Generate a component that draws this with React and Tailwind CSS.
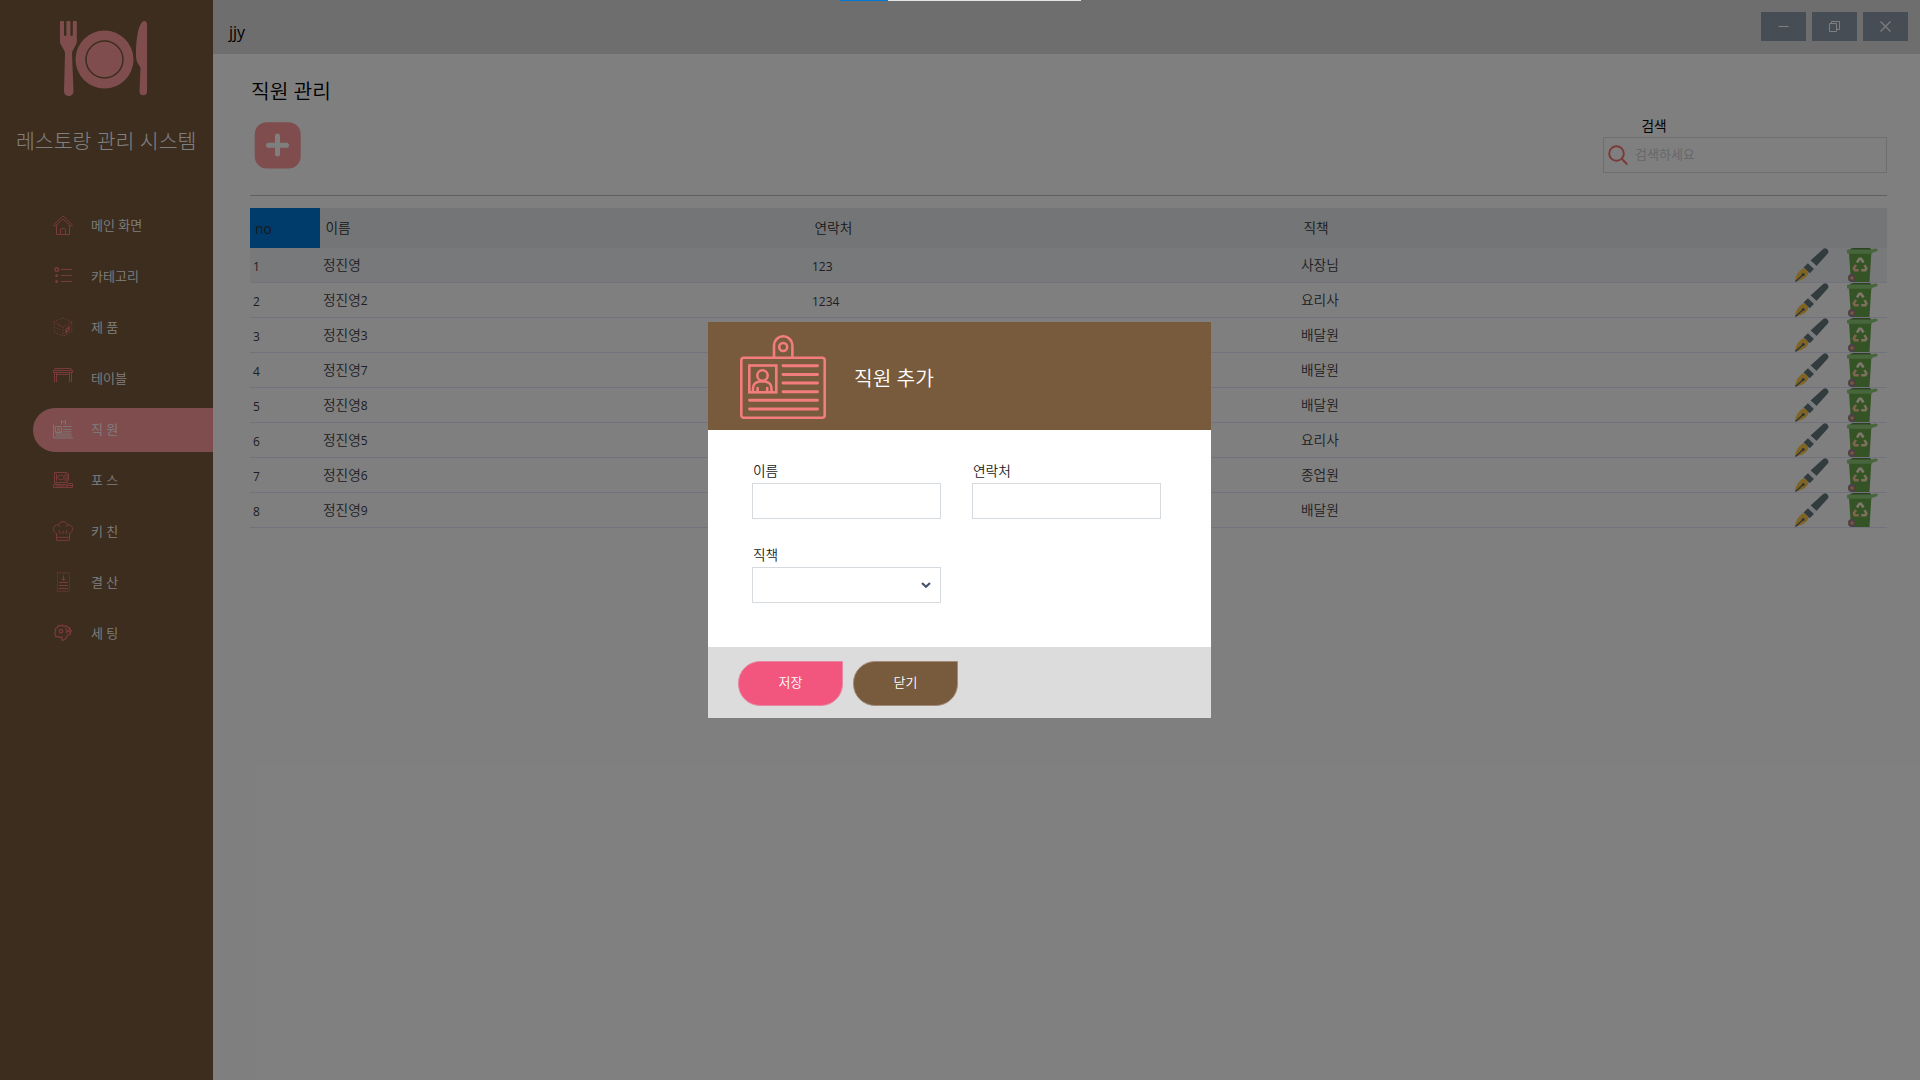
import React from "react";

const FONT = "font-['Open_Sans','Noto_Sans_CJK_KR',sans-serif]";

const svgProps = {
  width: 20,
  height: 20,
  viewBox: "0 0 20 20",
  fill: "none",
  stroke: "currentColor",
  strokeWidth: 1,
};

const HomeIcon = () => (
  <svg {...svgProps}>
    <path d="M.6 10 10 .9 19.4 10 18.2 11.4 10 4 1.8 11.4Z" />
    <path d="M3.5 10.2v9.3h13v-9.3M7.5 19.3v-4.6q0-1.2 1.2-1.2h2.6q1.2 0 1.2 1.2v4.6" />
  </svg>
);
const ListIcon = () => (
  <svg {...svgProps}>
    <circle cx="3.8" cy="3.6" r="1.8" strokeWidth="1.4" />
    <path d="M8 3.5h11M8 9.5h11M8 15.5h11" />
    <circle cx="3.6" cy="9.6" r="1.5" fill="currentColor" stroke="none" />
    <circle cx="3.6" cy="15.6" r="1.5" fill="currentColor" stroke="none" />
  </svg>
);
const BoxIcon = () => (
  <svg {...svgProps} strokeDasharray="1.4 1.3" strokeWidth=".9">
    <path d="M10 .8 18.8 5v10L10 19.2 1.2 15V5Z" />
    <path d="M1.2 5 10 10l8.8-5M10 10v9" />
    <path d="M4 11l3 2M5 7.5l3 2" />
    <path d="M13 12.5l3-2.5v3l-3 2.5z" strokeDasharray="none" strokeWidth="1.3" />
  </svg>
);
const TableIcon = () => (
  <svg {...svgProps}>
    <path d="M2 .5h16l1.500 2.500v1.500H.5V3ZM.8 2.500h18.400M1.500 4.500v9.800M3.500 4.500v9.800M3.500 6.500h13M16.500 4.500v9.800M18.500 4.500v9.800" />
  </svg>
);
const StaffIcon = () => (
  <svg {...svgProps}>
    <path d="M.5 5.500v13.500H20M8.500 5.500V1.500l2 1.500 2-1.500v4M2.500 7.500h6v6h-6ZM10 7.500h8.500M10 10.500h8.500M10 12.800h8.500M2.500 15h16M2.500 17h16" />
    <path d="M4 13.200q0-2 1.500-2t1.500 2" />
    <circle cx="5.500" cy="9.700" r=".8" />
  </svg>
);
const PosIcon = () => (
  <svg {...svgProps}>
    <path d="M1.500 2.500h12.500v10H1.500ZM3.500 4v7M12 4v7M14 4h1.500v6L14 12M.5 14.500h13v3H.5ZM3 12.500v2M2.500 16h9M13.500 17.500l1.500-4h4.500v4ZM15 15.500h4" />
    <ellipse cx="7.800" cy="7.500" rx="3" ry="2.400" />
  </svg>
);
const ChefIcon = () => (
  <svg {...svgProps}>
    <path d="M3.500 19.400v-7.200C1.400 11.600.5 10 .5 7.900c0-2.600 1.900-4.400 5-4C6 1.900 7.600.7 10 .7s4 1.200 4.500 3.200c3.100-.4 5 1.400 5 4 0 2.100-.9 3.700-3 4.300v7.200ZM3.500 16.300h13" />
    <path d="M5.500 4l2 2M14.500 4l-2 2M6 9l1.200 4M10 9.500v3.500M14 9l-1.200 4" />
  </svg>
);
const ReceiptIcon = () => (
  <svg {...svgProps}>
    <path d="M4 .8h12.500M4 19.200h12.500" strokeDasharray="1.500 1" />
    <path d="M4.500 1v18M16.500 1v18" strokeOpacity=".45" />
    <path d="M10.500 3.500v5M8.500 6.500l2 2 2-2M6 10.500h9M6 13.500h9M6 16.500h9" />
  </svg>
);
const SettingsIcon = () => (
  <svg {...svgProps} strokeWidth="1.300">
    <path d="M2.300 5.500 4.500 4.600 5.300 2.600 7.500 3l1.800-1 1.500 1.600 2.400-.8 1.200 1.400 2.200.4.6 2.200 1.300 1-1.200 1.200.3 1.800-3 1.300-2.400 4-2 1.300-1.500-.8.300-2.600-2.300.6-1.600-1.200-2.400.2-.6-2.200L1.800 9.300l.9-1.700Z" />
    <circle cx="8" cy="8.300" r="1.800" />
    <path d="M12.300 5l1.500 2.500-.6 2.500M16 5.500v3h-2" />
  </svg>
);

const NAV = [
  { label: "메인 화면", Icon: HomeIcon },
  { label: "카테고리", Icon: ListIcon },
  { label: "제 품", Icon: BoxIcon },
  { label: "테이블", Icon: TableIcon },
  { label: "직 원", Icon: StaffIcon, active: true },
  { label: "포 스", Icon: PosIcon },
  { label: "키 친", Icon: ChefIcon },
  { label: "결 산", Icon: ReceiptIcon },
  { label: "세 팅", Icon: SettingsIcon },
];

const ROWS = [
  ["1", "정진영", "", "123", "사장님"],
  ["2", "정진영", "2", "1234", "요리사"],
  ["3", "정진영", "3", "", "배달원"],
  ["4", "정진영", "7", "", "배달원"],
  ["5", "정진영", "8", "", "배달원"],
  ["6", "정진영", "5", "", "요리사"],
  ["7", "정진영", "6", "", "종업원"],
  ["8", "정진영", "9", "", "배달원"],
];

function Logo() {
  return (
    <svg width="88" height="76" viewBox="0 0 88 76" fill="#ff9b9b" className="shrink-0">
      <path d="M0 1.500a2 2 0 0 1 4 0V14q0 1 1.200 1t1.200-1V1.500a2 2 0 0 1 4 0V14q0 1 1.200 1t1.200-1V1.500a2 2 0 0 1 4 0V20.500q0 1.500-.8 3l-3.200 6q-.8 1.500-.8 3L13.500 70.500a4.700 4.700 0 0 1-9.500 0L5 32.500q0-1.500-.8-3L.8 23.500Q0 22 0 20.500Z" />
      <circle cx="44.500" cy="38.500" r="29" />
      <circle cx="44.500" cy="38.500" r="18.500" fill="none" stroke="#785a3c" strokeWidth="1.500" />
      <path d="M87 3.500Q87 0 84 0C79 1.500 76 15 76 35c0 5 2.500 9 4.500 11.500L79.500 71a3.800 3.800 0 0 0 7.500 0Z" />
    </svg>
  );
}

function Sidebar() {
  return (
    <aside className="flex w-[213px] shrink-0 flex-col bg-[#785a3c] text-white">
      <div className="flex h-[95px] pl-[60px] pt-[21px]">
        <Logo />
      </div>
      <div className="mt-[30px] h-8 whitespace-nowrap pl-4 text-[20.500px] font-light leading-8 text-white">
        레스토랑 관리 시스템
      </div>
      <nav className="mt-[46.500px] flex flex-col gap-[7px]">
        {NAV.map(({ label, Icon, active }) => (
          <div
            key={label}
            className={
              "ml-[33px] flex h-[44px] items-center rounded-l-full pl-5 " +
              (active ? "bg-[#ff9b9b]" : "")
            }
          >
            <span className={"-mt-px " + (active ? "text-[#ffe8e8]" : "text-[#f07474]")}>
              <Icon />
            </span>
            <span className="-mt-px ml-[18px] text-[13px] font-[350] leading-5 text-white">{label}</span>
          </div>
        ))}
      </nav>
    </aside>
  );
}

function WindowButton({ children }) {
  return (
    <button className="flex h-[29px] w-[45px] items-center justify-center bg-[#8d9aa9]">
      <svg width="11" height="11" viewBox="0 0 11 11" fill="none" stroke="#fff">
        {children}
      </svg>
    </button>
  );
}

function TitleBar() {
  return (
    <header className="flex h-[54px] shrink-0 justify-between bg-[#dcdcdc] pl-4 pr-3 pt-3">
      <span className="mt-[8px] text-base leading-6 text-black">jjy</span>
      <div className="flex gap-1.5">
        <WindowButton>
          <path d="M.500 5.500h10" />
        </WindowButton>
        <WindowButton>
          <path d="M.500 2.500h7v8h-7ZM2.500 2.500v-2h8v8h-3" />
        </WindowButton>
        <WindowButton>
          <path d="M.500.500l10 10M10.500.500l-10 10" strokeWidth="1.200" />
        </WindowButton>
      </div>
    </header>
  );
}

function PenIcon() {
  return (
    <svg width="34" height="34" viewBox="0 0 34 34" className="shrink-0">
      <path d="M28.500.800q1.700-1.200 3.500.2l1 1.200q1 1.600-.2 3.300L21.500 18l-6-5.500Z" fill="#64797f" />
      <path d="M15.500 12.500l6 5.500-2.600 2.900-6-5.600Z" fill="#f0f5f7" />
      <path d="M12.900 15.300l6 5.600-4.200 4.300-6.200-5.700Z" fill="#64797f" />
      <path d="M8 20.300q3 .2 4 2.200 1.400 1.500 1.300 3.300Q11 31.500 2 33.200L.5 33.500 0 32.800Q1 25 8 20.300Z" fill="#ffc848" />
      <path d="M.5 33.500 8 26.800" stroke="#566a72" strokeWidth="1.300" />
      <circle cx="8.200" cy="26.600" r="1.500" fill="#566a72" />
    </svg>
  );
}

function BinIcon() {
  return (
    <svg width="31" height="34" viewBox="0 0 31 34" className="shrink-0">
      <path d="M3 1 6 0h17l1.200 1.500V4H2.500Z" fill="#568547" />
      <path d="M2 5h22.300L22.500 34H4Z" fill="#6aa84a" />
      <path d="M0 2.700Q0 1.500 1.500 1.500h23l3.500-1 2.500.5v2l-5.500 2v.8H1.500Q0 5.800 0 4.500Z" fill="#8fcd78" />
      <g fill="none" strokeWidth="2.500">
        <path d="M10 14.500l2.400-3.700h1.600l2.500 3.700" stroke="#fff0d8" />
        <path d="M17.500 17l1.900 3.500-1 1.700h-4.200" stroke="#ffe0c0" />
        <path d="M11.700 22.200H7.800l-1-1.700 2.100-3.700" stroke="#ffc8a8" />
      </g>
      <circle cx="5" cy="30" r="4" fill="#96808e" />
      <circle cx="5" cy="30" r="1.800" fill="#f0b45a" />
    </svg>
  );
}

const GRID = "grid grid-cols-[70px_489px_489px_1fr]";

function StaffTable() {
  return (
    <div className="mt-3 text-[13.700px] font-[350] text-[#3c3c46]">
      <div className={GRID + " h-10 items-center bg-[#e7eaed] text-[#333]"}>
        <div className="flex h-10 items-center bg-[#0078d7] pl-[5px] pt-[3px] font-normal">no</div>
        <div className="pl-[5.500px]">이름</div>
        <div className="pl-[5.500px]">연락처</div>
        <div className="pl-[5.500px]">직책</div>
      </div>
      {ROWS.map(([no, name, suffix, phone, role], i) => (
        <div
          key={no}
          className={
            GRID + " h-[35px] items-center border-b border-[#e4e4fa] " + (i === 0 ? "bg-[#f1f3f6]" : "")
          }
        >
          <div className="pl-[3px] pt-[4px] text-[12px] font-normal">{no}</div>
          <div className="pl-[3px]">
            {name}
            <span className="text-[12px] font-normal">{suffix}</span>
          </div>
          <div className="pl-[3px] pt-[4px] text-[12px] font-normal">{phone}</div>
          <div className="flex items-center justify-between pl-[3px] pr-[9px]">
            <span>{role}</span>
            <div className="flex gap-[18px]">
              <PenIcon />
              <BinIcon />
            </div>
          </div>
        </div>
      ))}
    </div>
  );
}

function Content() {
  return (
    <main className="flex flex-1 flex-col bg-white pl-[37px] pr-[33px] pt-[21px]">
      <div className="flex h-[120px] justify-between">
        <div>
          <h1 className="h-8 pl-px text-[20.300px] font-[350] leading-8 text-black">직원 관리</h1>
          <button className="ml-1 mt-[14px] block">
            <svg width="48" height="48" viewBox="0 0 48 48">
              <rect x=".7" y="1.200" width="46" height="46.300" rx="12" fill="#ff9b9b" />
              <path d="M23.500 15v18M14.500 24.300H32.500" stroke="#fff" strokeWidth="5" strokeLinecap="round" />
            </svg>
          </button>
        </div>
        <div className="w-[284px] pt-[41px]">
          <div className="h-[21px] pl-[38.500px] text-[13.700px] leading-5 text-black">검색</div>
          <div className="flex h-9 items-center border border-[#dadce0] pl-[4px]">
            <svg width="20" height="21" viewBox="0 0 20 21" fill="none" stroke="#f87474" strokeWidth="2">
              <circle cx="8.500" cy="8.500" r="7.300" />
              <path d="M13.500 13.500l5.800 6" />
            </svg>
            <span className="ml-[7px] pb-[2px] text-[13px] font-[350] leading-5 text-[#c8cbd0]">검색하세요</span>
          </div>
        </div>
      </div>
      <div className="h-px shrink-0 bg-[#c0c0c0]" />
      <StaffTable />
    </main>
  );
}

function BadgeIcon() {
  return (
    <svg width="86" height="84" viewBox="0 0 86 84" fill="none" stroke="#f37d7d" strokeWidth="2.600" strokeLinecap="round">
      <rect x="1.300" y="22.800" width="83.400" height="59.900" rx="2.500" />
      <path d="M34 22.500V10.500a9.200 9.200 0 0 1 18.400 0v12" />
      <circle cx="43.200" cy="12" r="4" />
      <rect x="9.300" y="30.500" width="27" height="26.800" strokeLinecap="butt" />
      <circle cx="22.500" cy="40.500" r="5.200" />
      <path d="M13 57v-3.500q0-6 6.500-7h5.500q6.500 1 6.500 7V57M17.600 57v-4M27.200 57v-4" />
      <path d="M43 30.800h34.500M43 39.500h34.500M43 48h34.500M43 56.700h34.500M9.500 65.300h68M9.500 74h68" strokeWidth="2.900" />
    </svg>
  );
}

function Field({ label, children }) {
  return (
    <label className="flex w-[189px] flex-col">
      <span className="h-[22px] pl-px text-[13.700px] font-[350] leading-5 text-[#222]">{label}</span>
      <span className="flex h-9 items-center justify-end border border-[#d5dadf] bg-white pr-[9px]">{children}</span>
    </label>
  );
}

function Modal() {
  return (
    <section className="flex h-[396px] w-[503px] flex-col bg-white">
      <div className="flex h-[108px] shrink-0 items-start bg-[#785a3c] pl-8 pt-[13px]">
        <BadgeIcon />
        <h2 className="ml-[28px] mt-[27px] text-[20.300px] font-[350] leading-8 text-white">직원 추가</h2>
      </div>
      <div className="grid h-[217px] shrink-0 grid-cols-[189px_189px] content-start gap-x-[31px] gap-y-[26px] pl-11 pt-[31px]">
        <Field label="이름" />
        <Field label="연락처" />
        <Field label="직책">
          <svg width="10" height="8" viewBox="0 0 10 8" fill="none" stroke="#44546e" strokeWidth="2.200">
            <path d="M1 2l4 3.800 4-3.800" />
          </svg>
        </Field>
      </div>
      <div className="flex h-[71px] gap-[10px] bg-[#dcdcdc] pl-[30px] pt-[14px]">
        <button className="h-[45px] w-[105px] rounded-[22px] rounded-tr-none border border-[#e987a2] bg-[#f2567e] pb-px text-[13px] font-[350] text-white">
          저장
        </button>
        <button className="h-[45px] w-[105px] rounded-[22px] rounded-tr-none border border-[#a08c78] bg-[#785a3c] pb-px text-[13px] font-[350] text-white">
          닫기
        </button>
      </div>
    </section>
  );
}

export default function App() {
  return (
    <div className={"relative flex h-[1080px] w-[1920px] overflow-hidden bg-white " + FONT}>
      <Sidebar />
      <div className="flex flex-1 flex-col">
        <TitleBar />
        <Content />
      </div>
      <div className="absolute inset-0 flex items-start bg-black/50 pl-[708px] pt-[322px]">
        <Modal />
      </div>
      <div className="absolute left-[840px] top-0 flex h-px w-[241px] bg-[#e5e5e5]">
        <div className="w-12 bg-[#0078d7]" />
      </div>
    </div>
  );
}
